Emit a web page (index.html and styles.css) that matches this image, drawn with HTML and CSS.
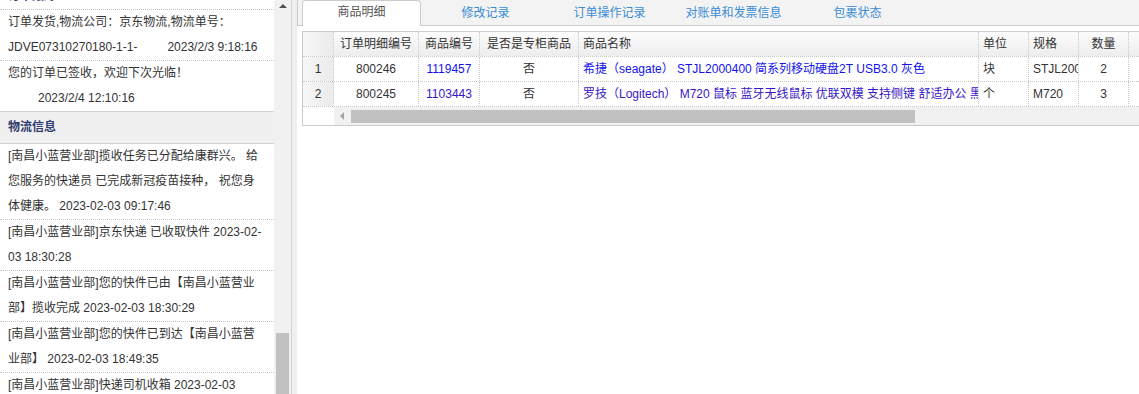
FILE: index.html
```html
<!doctype html>
<html lang="zh-CN">
  <head>
    <meta charset="UTF-8" />
    <title>订单详情</title>
    <link rel="stylesheet" href="styles.css">
  </head>
  <body>
    <!-- Left: order tracking -->
    <div class="side">
      <div class="log">
        <div class="log-item cut">订单跟踪</div>
        <div class="log-item">订单发货,物流公司：京东物流,物流单号：<br>JDVE07310270180-1-1-<span class="log-time">2023/2/3 9:18:16</span></div>
        <div class="log-item last">您的订单已签收，欢迎下次光临！<span class="log-time">2023/2/4 12:10:16</span></div>
        <div class="log-title">物流信息</div>
        <div class="log-item">[南昌小蓝营业部]揽收任务已分配给康群兴。 给您服务的快递员 已完成新冠疫苗接种， 祝您身体健康。 2023-02-03 09:17:46</div>
        <div class="log-item">[南昌小蓝营业部]京东快递 已收取快件 2023-02-<wbr>03 18:30:28</div>
        <div class="log-item">[南昌小蓝营业部]您的快件已由【南昌小蓝营业部】揽收完成 2023-02-03 18:30:29</div>
        <div class="log-item">[南昌小蓝营业部]您的快件已到达【南昌小蓝营业部】 2023-02-03 18:49:35</div>
        <div class="log-item">[南昌小蓝营业部]快递司机收箱 2023-02-03 19:02:51</div>
      </div>
      <div class="vscroll">
        <span class="arrow-up"></span>
        <span class="vthumb"></span>
      </div>
      <div class="split"></div>
    </div>

    <!-- Right: tabs and goods grid -->
    <div class="main">
      <div class="tabs">
        <div class="tab on">商品明细</div>
        <div class="tab">修改记录</div>
        <div class="tab">订单操作记录</div>
        <div class="tab">对账单和发票信息</div>
        <div class="tab">包裹状态</div>
      </div>

      <div class="grid">
        <div class="row head">
          <div class="cell c0 rn"></div>
          <div class="cell c1 mid">订单明细编号</div>
          <div class="cell c2 mid">商品编号</div>
          <div class="cell c3 mid">是否是专柜商品</div>
          <div class="cell c4">商品名称</div>
          <div class="cell c5">单位</div>
          <div class="cell c6">规格</div>
          <div class="cell c7 mid">数量</div>
          <div class="cell c8"></div>
        </div>
        <div class="row">
          <div class="cell c0 rn mid">1</div>
          <div class="cell c1 mid">800246</div>
          <div class="cell c2 mid lnk">1119457</div>
          <div class="cell c3 mid">否</div>
          <div class="cell c4 lnk">希捷（seagate） STJL2000400 简系列移动硬盘2T USB3.0 灰色</div>
          <div class="cell c5">块</div>
          <div class="cell c6">STJL2000400</div>
          <div class="cell c7 mid">2</div>
          <div class="cell c8"></div>
        </div>
        <div class="row">
          <div class="cell c0 rn mid">2</div>
          <div class="cell c1 mid">800245</div>
          <div class="cell c2 mid lnk visited">1103443</div>
          <div class="cell c3 mid">否</div>
          <div class="cell c4 lnk visited">罗技（Logitech） M720 鼠标 蓝牙无线鼠标 优联双模 支持侧键 舒适办公 黑色</div>
          <div class="cell c5">个</div>
          <div class="cell c6">M720</div>
          <div class="cell c7 mid">3</div>
          <div class="cell c8"></div>
        </div>
        <div class="hbar">
          <div class="hbar-pad"></div>
          <div class="hbar-track">
            <span class="arrow-left"></span>
            <span class="hthumb"></span>
          </div>
        </div>
      </div>
    </div>
  </body>
</html>
```

FILE: styles.css
```css
body {
  margin: 0;
  font: 12px "Liberation Sans", "Noto Sans CJK SC", sans-serif;
  color: #333;
  background: #fff;
  display: flex;
  height: 394px;
  overflow: hidden;
}

/* left column */
.side {
  display: flex;
  width: 297px;
  flex-shrink: 0;
}
.log {
  width: 274px;
  overflow: hidden;
}
.log-item {
  padding: 0 10px 0 8px;
  line-height: 25px;
  border-bottom: 1px dotted #c4c4c4;
}
.log-item.cut {
  margin-top: -16px;
  font-weight: bold;
  color: #2e3b6e;
}
.log-item.last {
  border-bottom: 0;
}
.log-time {
  display: inline-block;
  margin-left: 30px;
}
.log-title {
  line-height: 31px;
  padding-left: 8px;
  background: #f0f0f0;
  border-top: 1px solid #d2d2d2;
  border-bottom: 1px solid #d2d2d2;
  font-weight: bold;
  color: #2e3b6e;
}
.vscroll {
  width: 17px;
  background: #f1f1f1;
  display: flex;
  flex-direction: column;
  justify-content: space-between;
  align-items: center;
}
.arrow-up {
  width: 0;
  height: 0;
  margin-top: 4px;
  border-left: 4px solid transparent;
  border-right: 4px solid transparent;
  border-bottom: 4px solid #505050;
}
.vthumb {
  width: 13px;
  height: 61px;
  background: #c1c1c1;
}
.split {
  width: 5px;
  border-left: 1px solid #d4d4d4;
  background: #efefef;
}

/* right column */
.main {
  flex: 1;
  min-width: 0;
  overflow: hidden;
}
.tabs {
  display: flex;
  align-items: flex-end;
  height: 25px;
  padding-left: 4px;
  background: #f3f3f3;
  border-left: 1px solid #ccc;
  border-bottom: 1px solid #ccc;
}
.tab {
  box-sizing: border-box;
  width: 119px;
  margin-right: 5px;
  text-align: center;
  line-height: 23px;
  color: #3b8cd6;
}
.tab.on {
  height: 26px;
  margin-bottom: -1px;
  background: #fff;
  border: 1px solid #ccc;
  border-bottom: 0;
  border-radius: 4px 4px 0 0;
  color: #555;
}

.grid {
  width: 1000px;
  margin: 5px 0 0 5px;
  border: 1px solid #ccc;
  border-right: 0;
}
.row {
  display: flex;
  box-sizing: border-box;
  height: 25px;
  border-bottom: 1px dotted #c8c8c8;
}
.row.head {
  background: linear-gradient(#fcfcfc, #ededed);
}
.cell {
  box-sizing: border-box;
  flex-shrink: 0;
  padding: 0 4px;
  line-height: 24px;
  border-right: 1px dotted #c8c8c8;
  white-space: nowrap;
  overflow: hidden;
}
.cell.mid {
  text-align: center;
}
.cell.rn {
  background: linear-gradient(to right, #f7f7f7, #ebebeb);
}
.cell.lnk {
  color: #1212ee;
}
.cell.lnk.visited {
  color: #3716c8;
}
.c0 { width: 31px; }
.c1 { width: 85px; }
.c2 { width: 61px; }
.c3 { width: 99px; }
.c4 { width: 400px; }
.c5 { width: 50px; }
.c6 { width: 50px; }
.c7 { width: 50px; }
.c8 { width: 100px; }

.hbar {
  display: flex;
  height: 18px;
}
.hbar-pad {
  width: 31px;
}
.hbar-track {
  flex: 1;
  display: flex;
  align-items: center;
  padding-left: 6px;
  background: #f1f1f1;
}
.arrow-left {
  width: 0;
  height: 0;
  margin-right: 7px;
  border-top: 4px solid transparent;
  border-bottom: 4px solid transparent;
  border-right: 4px solid #a3a3a3;
}
.hthumb {
  width: 564px;
  height: 13px;
  background: #c1c1c1;
}
```
